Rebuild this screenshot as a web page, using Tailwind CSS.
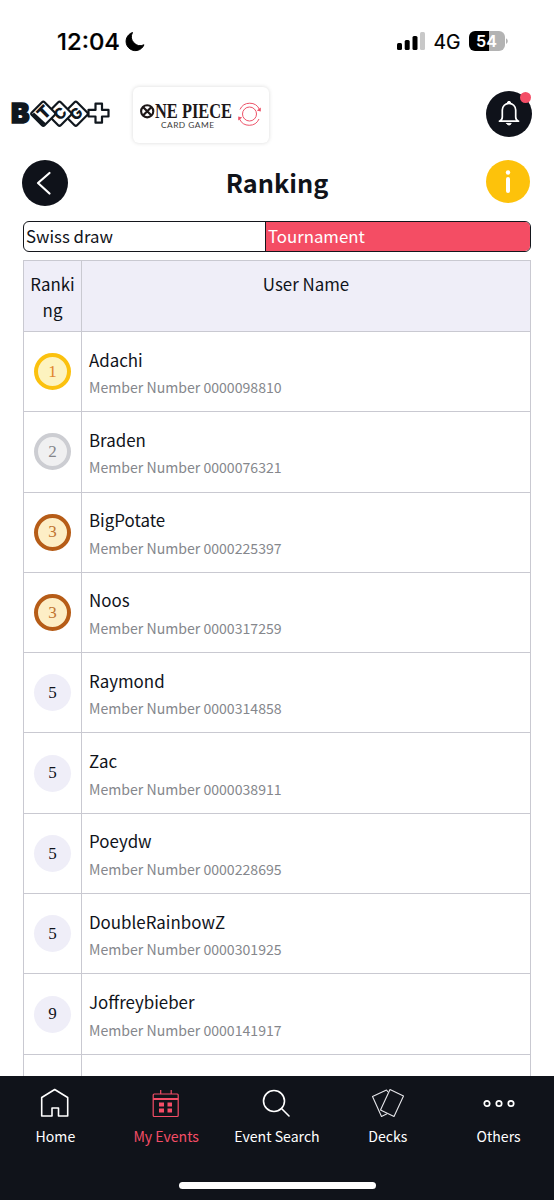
<!DOCTYPE html>
<html lang="en">
<head>
<meta charset="utf-8">
<title>Ranking</title>
<script src="https://cdn.jsdelivr.net/npm/@tailwindcss/browser@4"></script>
</head>
<body class="bg-white">
<div class="w-[554px] h-[1200px] overflow-hidden flex flex-col bg-white text-[#10131a] font-['Noto_Sans_CJK_JP','Noto_Sans',sans-serif]">

  <!-- Status bar -->
  <div class="h-[84px] shrink-0 pl-[57px] pr-[45px] flex items-center justify-between font-['Inter',sans-serif] text-black">
    <svg width="90" height="30" viewBox="0 0 90 30">
      <text x="0" y="23" font-size="23" font-weight="500" stroke="#000" stroke-width="0.200" textLength="63" lengthAdjust="spacingAndGlyphs">12:04</text>
      <path d="M75.500 5.500a9.300 9.300 0 1 0 11.500 12.300a8.900 8.900 0 0 1-11.500-12.300z" stroke="#000" stroke-width="1" stroke-linejoin="round"/>
    </svg>
    <svg width="112" height="30" viewBox="397 27 112 30">
      <rect x="397" y="43" width="5" height="7" rx="1.500"/><rect x="404.700" y="40" width="5" height="10" rx="1.500"/><rect x="412.500" y="36" width="5" height="14" rx="1.500"/><rect x="420" y="32" width="5" height="18" rx="1.500" fill="#c8c8c8"/>
      <text x="433.500" y="49" font-size="19.500" font-weight="400" stroke="#000" stroke-width="0.200" textLength="27" lengthAdjust="spacingAndGlyphs">4G</text>
      <path d="M475 31h14v20h-14a6 6 0 0 1-6-6v-8a6 6 0 0 1 6-6z"/>
      <path d="M489 31h10a6 6 0 0 1 6 6v8a6 6 0 0 1-6 6h-10z" fill="#b3b3b3"/>
      <path d="M506 38.300q1.800 0.900 1.800 2.800t-1.800 2.800z" fill="#b3b3b3"/>
      <text x="476" y="47" font-size="16.500" font-weight="600" fill="#fff" textLength="21" lengthAdjust="spacingAndGlyphs">54</text>
    </svg>
  </div>

  <!-- App header -->
  <header class="h-[60px] shrink-0 pl-[11px] pr-[22px] flex items-center">
    <svg class="shrink-0 overflow-visible" width="100" height="30" viewBox="0 0 100 30">
      <g fill="#10171e" font-family="'Inter'" font-weight="900">
        <text x="0" y="24.300" font-size="27" stroke="#10171e" stroke-width="1.500" textLength="18.500" lengthAdjust="spacingAndGlyphs">B</text>
        <g fill="#fff" stroke="#10171e" stroke-width="2.200" stroke-linejoin="round">
          <path d="M84.500 4.700h6.500v6.200h6.500v6.600h-6.500v6.200h-6.500v-6.200h-7v-6.600h7z"/>
          <rect x="-9" y="-9" width="18" height="18" rx="1.800" transform="translate(64.800 14.700) rotate(45)"/>
          <rect x="-9" y="-9" width="18" height="18" rx="1.800" transform="translate(48.500 14.700) rotate(45)"/>
          <rect x="-9" y="-9" width="18" height="18" rx="1.800" transform="translate(32.300 14.700) rotate(45)"/>
        </g>
        <path d="M20.500 16l2.500-2.500 12 11-3.500 2z"/>
        <text font-size="17" text-anchor="middle" transform="translate(33 13.500) rotate(-45)" y="6">T</text>
        <text font-size="15" font-weight="800" text-anchor="middle" transform="translate(49 14.500) rotate(-45)" y="5.500">C</text>
        <text font-size="15" font-weight="800" text-anchor="middle" transform="translate(65 14.700) rotate(-45)" y="5.500">G</text>
      </g>
    </svg>
    <div class="shrink-0 ml-[22px] mt-px w-[136px] h-[56px] rounded-[6px] bg-white shadow-[0_0_4px_rgba(0,0,0,0.15)]">
      <svg width="136" height="56" viewBox="0 0 136 56">
        <g stroke="#1d1718" fill="none"><circle cx="14.200" cy="24.300" r="6.100" stroke-width="2.100"/><path d="M10 20l8.500 8.500M18.500 20l-8.500 8.500" stroke-width="2.200"/></g>
        <text x="22" y="30.800" font-family="'Liberation Serif'" font-weight="700" font-size="20.500" fill="#1d1718" textLength="77" lengthAdjust="spacingAndGlyphs">NE PIECE</text>
        <text x="28" y="40.600" font-family="Lato" font-size="8.400" fill="#3c3c3c" textLength="53" lengthAdjust="spacing">CARD GAME</text>
        <g fill="none" stroke="#ed5268" stroke-width="1">
          <circle cx="116.500" cy="27" r="7"/>
          <path d="M107 22.500a10.700 10.700 0 0 1 19.500 0M126 32a10.700 10.700 0 0 1-19.500 0"/>
          <path d="M127.800 20.500v4l-4-1zM105.200 33.500v-4l4 1z" fill="#ed5268" stroke="none"/>
        </g>
      </svg>
    </div>
    <div class="ml-auto relative size-[46px] rounded-full bg-[#0f121a] flex items-center justify-center">
      <svg width="24" height="28" viewBox="0 0 24 28" fill="none" stroke="#fff" stroke-width="1.700" stroke-linejoin="round" stroke-linecap="round">
        <path d="M2.500 21.200h19M2.500 21.200q2.800-1.200 2.800-4.200v-7a6.700 6.700 0 0 1 13.400 0v7q0 3 2.800 4.200"/>
        <path d="M10.300 3a1.700 1.700 0 0 1 3.400 0M9.800 23.400h4.400q-.6 1.600-2.200 1.600t-2.200-1.600z" fill="#fff" stroke-width="1"/>
      </svg>
      <span class="absolute top-px right-px size-[11px] rounded-full bg-[#f44d66]"></span>
    </div>
  </header>

  <!-- Page title -->
  <div class="h-[46px] mt-[16px] shrink-0 pl-[22px] pr-[24px] flex items-start justify-between">
    <button class="size-[46px] rounded-full bg-[#0f121a] flex items-center justify-center">
      <svg width="46" height="46" viewBox="0 0 46 46" fill="none" stroke="#fff" stroke-width="2.200" stroke-linecap="round" stroke-linejoin="round"><path d="M27.500 13L16 23l11.500 10.500"/></svg>
    </button>
    <h1 class="text-[25.300px] leading-[45px] font-bold">Ranking</h1>
    <svg width="44" height="43" viewBox="0 0 44 43"><ellipse cx="22" cy="21.500" rx="22" ry="21.500" fill="#fdc20b"/><circle cx="22" cy="12.500" r="2.200" fill="#fff"/><rect x="20" y="17" width="4" height="16" rx="2" fill="#fff"/></svg>
  </div>

  <!-- Tabs -->
  <div class="mx-[23px] mt-[15px] h-[31px] shrink-0 flex rounded-[6px] border-[1.500px] border-[#14161c] overflow-hidden text-[16.800px] leading-[29px]">
    <div class="w-[242px] pl-[2px] border-r border-[#14161c]">Swiss draw</div>
    <div class="flex-1 pl-[2px] bg-[#f44d64] text-white">Tournament</div>
  </div>

  <!-- Ranking table -->
  <main class="mt-[7.500px] mx-[23px] flex-1 min-h-0 overflow-hidden border-t border-l border-r border-[#c9c9d1]">
    <div class="h-[71.500px] flex bg-[#efeef8] border-b border-[#c9c9d1] text-[16.900px] leading-[25.500px] text-center">
      <div class="w-[58px] shrink-0 border-r border-[#c9c9d1] pt-[10.500px]">Ranki<br>ng</div>
      <div class="flex-1 pt-[10.500px]">User Name</div>
    </div>
    <div id="rows"></div>
  </main>

  <!-- Bottom navigation -->
  <nav class="h-[124px] shrink-0 bg-[#10131a] text-white flex flex-col items-center">
    <div class="w-full grid grid-cols-5 pt-[12px] text-[14.100px] leading-[22px] text-center">
      <div class="flex flex-col items-center gap-[5px]">
        <svg width="32" height="32" viewBox="0 0 32 32" fill="none" stroke="#fff" stroke-width="1.600" stroke-linejoin="round"><path d="M2.700 28V9.500L15.700 1.500 28.700 9.500V28H19.500V20H13V28z"/></svg>
        <span>Home</span>
      </div>
      <div class="flex flex-col items-center gap-[5px] text-[#f44d66]">
        <svg width="32" height="32" viewBox="0 0 32 32" fill="none" stroke="#f44d66" stroke-width="1.200"><rect x="3.200" y="6" width="25" height="22.500" rx="1"/><path d="M3.200 11h25" stroke-width="2"/><path d="M10.700 2v4M21.200 2v4"/><path d="M9 14.500h5v4H9zM17.500 14.500h4.500v4h-4.500zM9 20.500h5v4H9zM17.500 20.500h4.500v4h-4.500z" fill="#f44d66" stroke="none"/></svg>
        <span>My Events</span>
      </div>
      <div class="flex flex-col items-center gap-[5px]">
        <svg width="32" height="32" viewBox="0 0 32 32" fill="none" stroke="#fff" stroke-width="1.600" stroke-linecap="round"><circle cx="13" cy="13" r="10.500"/><path d="M20.500 20.500l7.500 7.500"/></svg>
        <span>Event Search</span>
      </div>
      <div class="flex flex-col items-center gap-[5px]">
        <svg width="34" height="32" viewBox="0 0 34 32" fill="none" stroke="#e6e6ea" stroke-width="1.100" stroke-linejoin="round"><path d="M19 1.500L32.500 8 23 28.500 9.500 22z"/><path d="M17 4L15.500 2 1.500 8.500 10.500 28.500 16 25.800"/></svg>
        <span>Decks</span>
      </div>
      <div class="flex flex-col items-center gap-[5px]">
        <svg width="32" height="32" viewBox="0 0 32 32" fill="none" stroke="#fff" stroke-width="1.700"><circle cx="4" cy="15.500" r="2.700"/><circle cx="16" cy="15.500" r="2.700"/><circle cx="28" cy="15.500" r="2.700"/></svg>
        <span>Others</span>
      </div>
    </div>
    <div class="mt-[35px] w-[197px] h-[7px] rounded-full bg-white"></div>
  </nav>
</div>

<script>
  const players = [
    [1, 'Adachi', '0000098810'],
    [2, 'Braden', '0000076321'],
    [3, 'BigPotate', '0000225397'],
    [3, 'Noos', '0000317259'],
    [5, 'Raymond', '0000314858'],
    [5, 'Zac', '0000038911'],
    [5, 'Poeydw', '0000228695'],
    [5, 'DoubleRainbowZ', '0000301925'],
    [9, 'Joffreybieber', '0000141917'],
    ['', '', '']
  ];
  const medals = {
    1: 'border-4 border-[#fbc10e] bg-[#fdf3bf] text-[#e0852e]',
    2: 'border-4 border-[#cccdd2] bg-[#f0f0f1] text-[#85868a]',
    3: 'border-4 border-[#b65c17] bg-[#fdeec6] text-[#c07431]'
  };
  document.getElementById('rows').innerHTML = players.map(([rank, name, number]) => `
    <div class="h-[80.300px] flex border-b border-[#c9c9d1]">
      <div class="w-[58px] shrink-0 border-r border-[#c9c9d1] flex items-center justify-center">
        ${rank ? `<span class="size-[37px] rounded-full flex items-center justify-center font-['Liberation_Serif',serif] text-[17px] ${medals[rank] || 'bg-[#efeef8]'}">${rank}</span>` : ''}
      </div>
      <div class="pl-[7px] pt-[14.500px]">
        ${name ? `<div class="text-[16.900px] leading-[26px]">${name}</div><div class="mt-[3.700px] text-[14.100px] leading-[22px] text-[#85878c]">Member Number ${number}</div>` : ''}
      </div>
    </div>`).join('');
</script>
</body>
</html>
